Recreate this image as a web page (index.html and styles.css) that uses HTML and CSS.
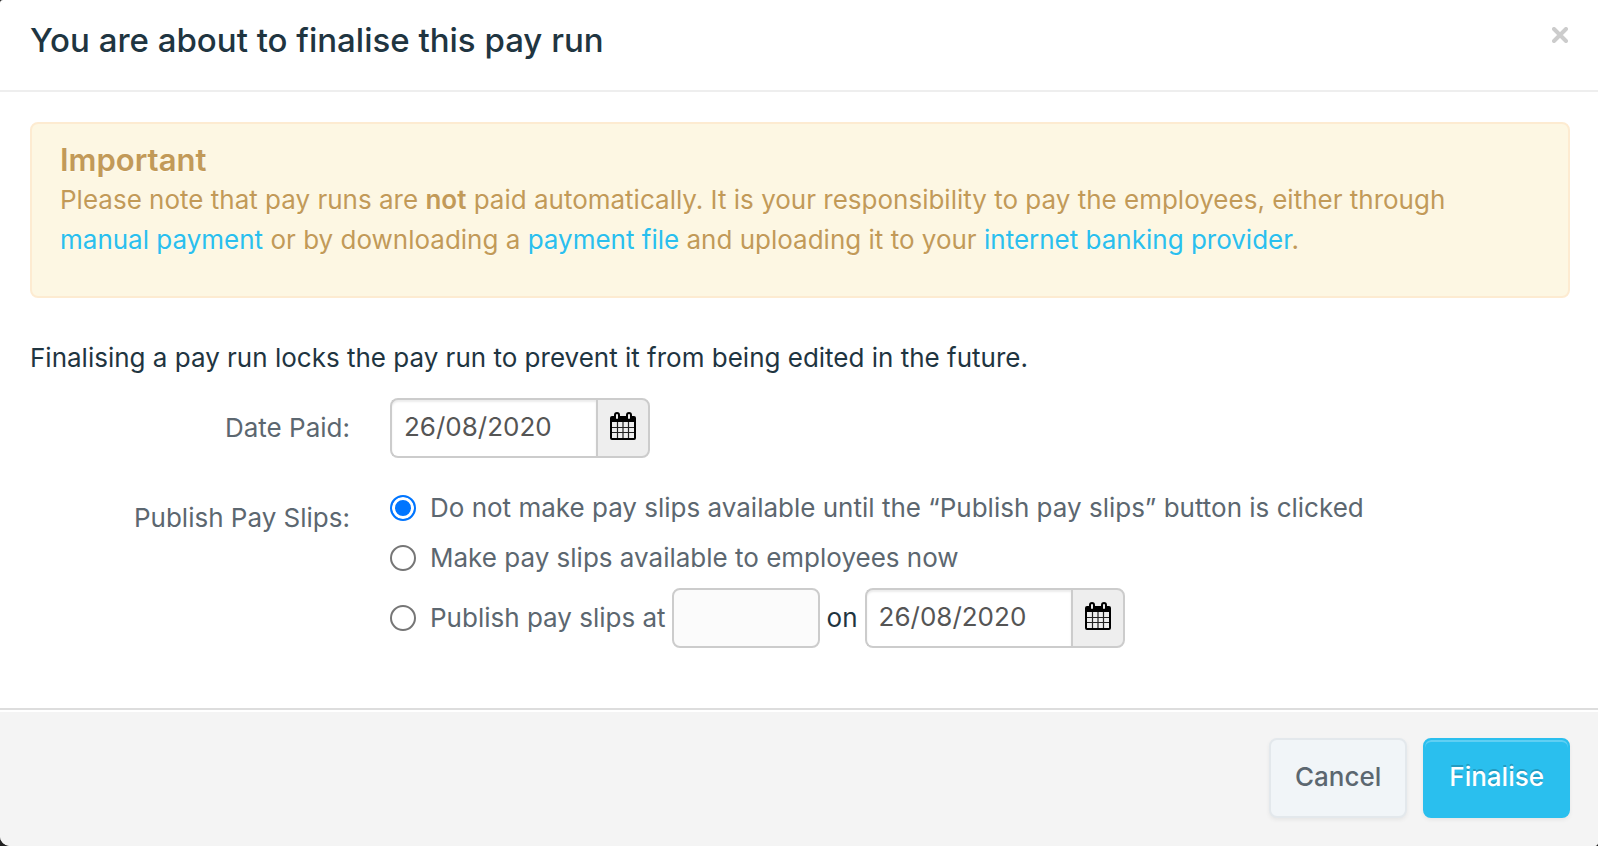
FILE: index.html
```html
<!DOCTYPE html>
<html lang="en">

<head>
    <meta charset="UTF-8">
    <meta name="viewport" content="width=device-width, initial-scale=1.0">
    <title>Finalise pay run</title>
    <link rel="stylesheet" href="styles.css">
</head>

<body>
    <!-- calendar icon shared by both date pickers -->
    <svg class="sprite" aria-hidden="true">
        <symbol id="icon-calendar" viewBox="0 0 26 28">
            <path d="M2 4h22a2 2 0 0 1 2 2v20a2 2 0 0 1-2 2H2a2 2 0 0 1-2-2V6a2 2 0 0 1 2-2zM2 10v16h22V10z" fill-rule="evenodd" fill="#000" />
            <path d="M7.500 10v16M13 10v16M18.500 10v16M2 15.500h22M2 20.500h22" stroke="#222" stroke-width="1.200" fill="none" />
            <rect x="5" y="1" width="4" height="7" rx="2" fill="#eee" stroke="#000" stroke-width="2" />
            <rect x="17" y="1" width="4" height="7" rx="2" fill="#eee" stroke="#000" stroke-width="2" />
        </symbol>
    </svg>

    <div class="modal" role="dialog" aria-labelledby="modalTitle">
        <div class="modal-header">
            <h1 id="modalTitle">You are about to finalise this pay run</h1>
            <button type="button" class="close" aria-label="Close">
                <svg viewBox="0 0 16 16" width="16" height="16">
                    <path d="M2 2l12 12M14 2L2 14" stroke="#ccc" stroke-width="4" stroke-linecap="round" />
                </svg>
            </button>
        </div>

        <form class="modal-form">
            <div class="modal-body">
                <div class="alert">
                    <h2>Important</h2>
                    <p>Please note that pay runs are <strong>not</strong> paid automatically. It is your responsibility to pay the employees, either through <a href="#">manual payment</a> or by downloading a <a href="#">payment file</a> and uploading it to your <a href="#">internet banking provider</a>.</p>
                </div>

                <p class="intro">Finalising a pay run locks the pay run to prevent it from being edited in the future.</p>

                <div class="form-row">
                    <label class="row-label" for="datePaid">Date Paid:</label>
                    <div class="date-picker">
                        <input type="text" id="datePaid" value="26/08/2020">
                        <button type="button" aria-label="Choose date paid"><svg><use href="#icon-calendar" /></svg></button>
                    </div>
                </div>

                <div class="form-row" role="radiogroup" aria-labelledby="publishLabel">
                    <span class="row-label" id="publishLabel">Publish Pay Slips:</span>
                    <div class="options">
                        <div class="option">
                            <input type="radio" name="publish" id="publishManual" checked>
                            <label for="publishManual">Do not make pay slips available until the “Publish pay slips” button is clicked</label>
                        </div>
                        <div class="option">
                            <input type="radio" name="publish" id="publishNow">
                            <label for="publishNow">Make pay slips available to employees now</label>
                        </div>
                        <div class="option option-schedule">
                            <input type="radio" name="publish" id="publishLater">
                            <label for="publishLater">Publish pay slips at</label>
                            <input type="text" class="time" aria-label="Publish time">
                            <label class="on" for="publishDate">on</label>
                            <div class="date-picker">
                                <input type="text" id="publishDate" value="26/08/2020">
                                <button type="button" aria-label="Choose publish date"><svg><use href="#icon-calendar" /></svg></button>
                            </div>
                        </div>
                    </div>
                </div>
            </div>

            <div class="modal-footer">
                <button type="button" class="btn">Cancel</button>
                <button type="submit" class="btn btn-primary">Finalise</button>
            </div>
        </form>
    </div>
</body>

</html>
```
FILE: styles.css
```css
* {
    box-sizing: border-box;
}

body {
    margin: 0;
    background-color: #222;
    color: #1f3541;
    font-family: Inter, "Liberation Sans", sans-serif;
    font-size: 26px;
    font-weight: 400;
    line-height: 40px;
}

h1,
h2,
p {
    margin: 0;
}

input,
button {
    font: inherit;
    margin: 0;
}

button {
    cursor: pointer;
}

a {
    color: #2abfee;
    text-decoration: none;
}

.sprite {
    display: none;
}

/* Modal */
.modal {
    display: flex;
    flex-direction: column;
    min-height: 100vh;
    background-color: #fff;
    border-radius: 3px 0 4px 10px;
    overflow: hidden;
}

.modal-header {
    display: flex;
    justify-content: space-between;
    align-items: flex-start;
    padding: 20px 28px 30px 30px;
    border-bottom: 2px solid #eee;
}

.modal-header h1 {
    font-size: 33px;
    font-weight: 500;
    line-height: 40px;
}

.close {
    display: flex;
    padding: 7px 2px;
    border: 0;
    background: none;
}

.modal-form {
    flex: 1;
    display: flex;
    flex-direction: column;
}

.modal-body {
    flex: 1;
    padding: 30px 28px 60px 30px;
}

.alert {
    padding: 16px 60px 36px 28px;
    border: 2px solid #fdebd1;
    border-radius: 8px;
    background-color: #fdf7e3;
    color: #c29a58;
    text-shadow: 0 1px 0 rgba(255, 255, 255, 0.5);
}

.alert h2 {
    font-size: 31px;
    font-weight: 600;
    line-height: 40px;
}

.alert strong {
    font-weight: 600;
}

.intro {
    margin: 40px 0 20px;
}

/* Form rows */
.form-row {
    display: flex;
    align-items: flex-start;
    gap: 40px;
    margin-bottom: 30px;
    color: #5c6770;
}

.form-row:last-child {
    margin-bottom: 0;
}

.row-label {
    flex: none;
    width: 320px;
    padding-top: 10px;
    text-align: right;
}

.date-picker {
    display: flex;
    width: 260px;
    height: 60px;
}

input[type="text"] {
    min-width: 0;
    height: 60px;
    padding: 0 12px 4px;
    border: 2px solid #ccc;
    border-radius: 8px;
    background-color: #fff;
    box-shadow: inset 0 2px 2px rgba(0, 0, 0, 0.08);
    color: #555;
}

.date-picker input[type="text"] {
    flex: 1;
    border-right: 0;
    border-radius: 8px 0 0 8px;
}

.date-picker button {
    display: flex;
    align-items: center;
    justify-content: center;
    width: 54px;
    padding: 0 0 4px;
    border: 2px solid #ccc;
    border-radius: 0 8px 8px 0;
    background-color: #eee;
}

.date-picker svg {
    width: 26px;
    height: 28px;
}

.option {
    display: flex;
    align-items: center;
    margin-bottom: 10px;
}

.option input[type="radio"] {
    appearance: none;
    width: 26px;
    height: 26px;
    margin-right: 14px;
    border: 2px solid #767676;
    border-radius: 50%;
    background-color: #fff;
}

.option input[type="radio"]:checked {
    border-color: #0075ff;
    background-color: #0075ff;
    box-shadow: inset 0 0 0 3px #fff;
}

.option-schedule {
    margin-bottom: 0;
}

.option .time {
    width: 148px;
    margin: 0 7px 0 6px;
    background-color: #fbfbfb;
    box-shadow: none;
}

.option .on {
    margin-right: 7px;
    color: #1f3541;
}

/* Footer */
.modal-footer {
    display: flex;
    justify-content: flex-end;
    gap: 16px;
    padding: 28px 28px 28px 30px;
    border-top: 2px solid #ddd;
    background-color: #f4f4f4;
    box-shadow: inset 0 2px 0 #fff;
}

.btn {
    height: 80px;
    padding: 0 24px 2px;
    border: 2px solid #e3e8ec;
    border-radius: 8px;
    background-color: #f1f5f8;
    box-shadow: 0 2px 4px rgba(0, 0, 0, 0.06);
    color: #5c6770;
    font-weight: 500;
}

.btn-primary {
    border-color: #2abfee;
    background-color: #2abfee;
    box-shadow: inset 0 2px 0 #60cff3, 0 2px 4px rgba(0, 0, 0, 0.06);
    color: #fff;
    text-shadow: 0 -2px 0 rgba(0, 0, 0, 0.2);
}
```
